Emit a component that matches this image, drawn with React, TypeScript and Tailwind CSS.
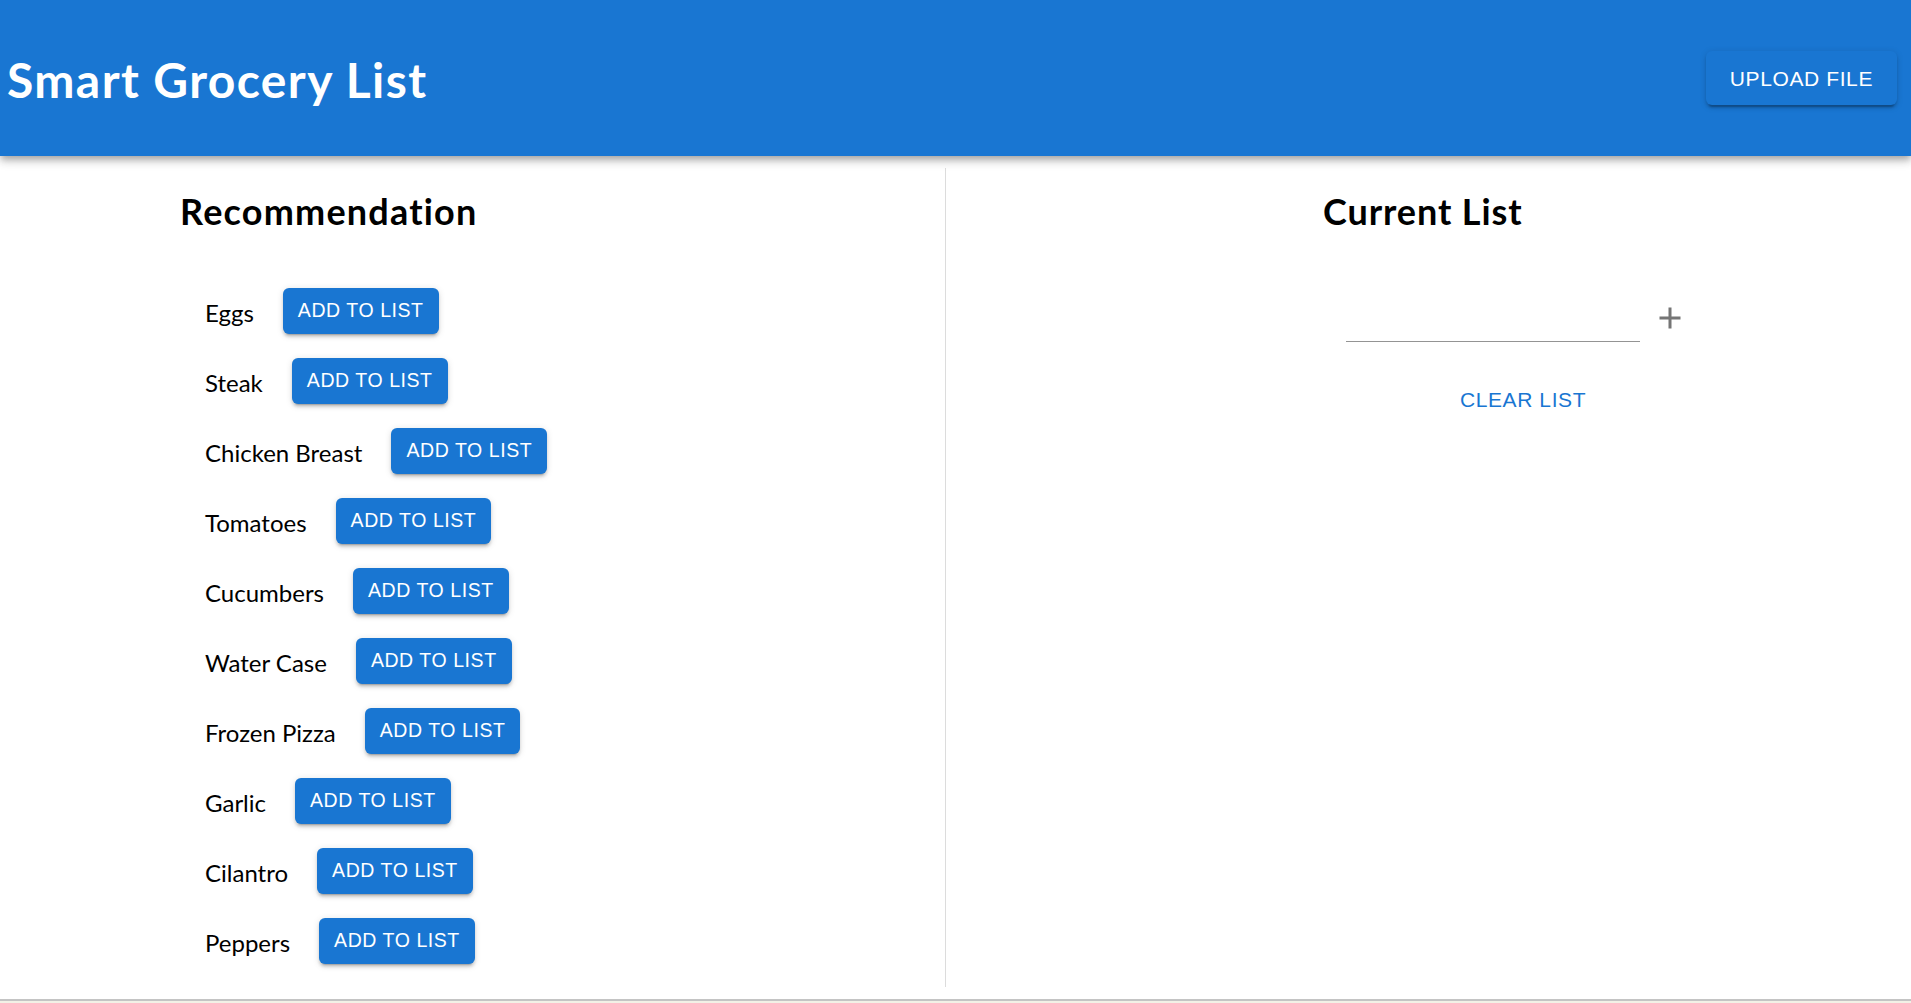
const ITEMS = [
  'Eggs',
  'Steak',
  'Chicken Breast',
  'Tomatoes',
  'Cucumbers',
  'Water Case',
  'Frozen Pizza',
  'Garlic',
  'Cilantro',
  'Peppers',
]

const SANS = "font-['Lato','Open_Sans',sans-serif]"
const BTN_FONT = "font-['Liberation_Sans',Arial,sans-serif]"

function AddButton() {
  return (
    <button
      className={`${BTN_FONT} h-[46px] px-[15px] rounded-[6px] bg-[#1976d2] text-white text-[19.5px] leading-none tracking-[0.56px] uppercase flex items-center shadow-[0_4px_1.5px_-3px_rgba(0,0,0,0.2),0_3px_3px_0_rgba(0,0,0,0.14),0_1.5px_7.5px_0_rgba(0,0,0,0.12)]`}
    >
      Add to list
    </button>
  )
}

export default function App() {
  return (
    <div className={`${SANS} h-screen flex flex-col bg-white overflow-hidden`}>
      {/* App bar */}
      <header className="relative z-10 h-[156px] shrink-0 bg-[#1976d2] flex items-center justify-between pl-[7px] pr-[14px] shadow-[0_3px_6px_-1.5px_rgba(0,0,0,0.2),0_6px_7.5px_0_rgba(0,0,0,0.14),0_1.5px_15px_0_rgba(0,0,0,0.12)]">
        <h1 className="mt-[4px] text-white font-bold text-[48px] leading-none tracking-[1.4px]">Smart Grocery List</h1>
        <button
          className={`${BTN_FONT} h-[54px] px-[24px] rounded-[6px] bg-[#1976d2] text-white text-[21px] leading-none tracking-[0.6px] uppercase flex items-center shadow-[0_4.5px_1.5px_-3px_rgba(0,0,0,0.2),0_3px_3px_0_rgba(0,0,0,0.14),0_1.5px_7.5px_0_rgba(0,0,0,0.12)]`}
        >
          Upload file
        </button>
      </header>

      {/* Main */}
      <main className="flex-1 flex py-[12px] min-h-0">
        {/* Recommendation column */}
        <section className="w-[946px] shrink-0 border-r border-[#dcdcdc] flex flex-col">
          <h2 className="mt-[25px] pl-[180px] text-[36px] font-bold leading-none tracking-[1.2px] text-black">Recommendation</h2>
          <ul className="mt-[59px] pl-[205px] flex flex-col gap-[24px]">
            {ITEMS.map(name => (
              <li key={name} className="h-[46px] flex items-center">
                <span className="mt-[3px] text-[24px] leading-[46px] text-black mr-[29px]">{name}</span>
                <AddButton />
              </li>
            ))}
          </ul>
        </section>

        {/* Current list column */}
        <section className="flex-1 flex flex-col">
          <h2 className="mt-[25px] pl-[377px] text-[36px] font-bold leading-none tracking-[0.9px] text-black">Current List</h2>
          <div className="mt-[59px] ml-[400px] w-fit flex flex-col items-center">
            <div className="flex items-start">
              <div className="mt-[8px] w-[294px] h-[46px] border-b border-[#949494]" />
              <button className="w-[60px] h-[60px] flex items-center justify-center rounded-full">
                <svg viewBox="0 0 24 24" className="w-[36px] h-[36px] fill-[#757575]">
                  <path d="M19 13h-6v6h-2v-6H5v-2h6V5h2v6h6v2z" />
                </svg>
              </button>
            </div>
            <button
              className={`${BTN_FONT} mt-[24px] h-[55px] px-[12px] text-[#1976d2] text-[21px] leading-none tracking-[0.6px] uppercase flex items-center`}
            >
              Clear list
            </button>
          </div>
        </section>
      </main>

      {/* window bottom edge */}
      <div className="h-[4px] shrink-0 border-t-2 border-[#c4c4c4] bg-[#f2f1e6]" />
    </div>
  )
}
